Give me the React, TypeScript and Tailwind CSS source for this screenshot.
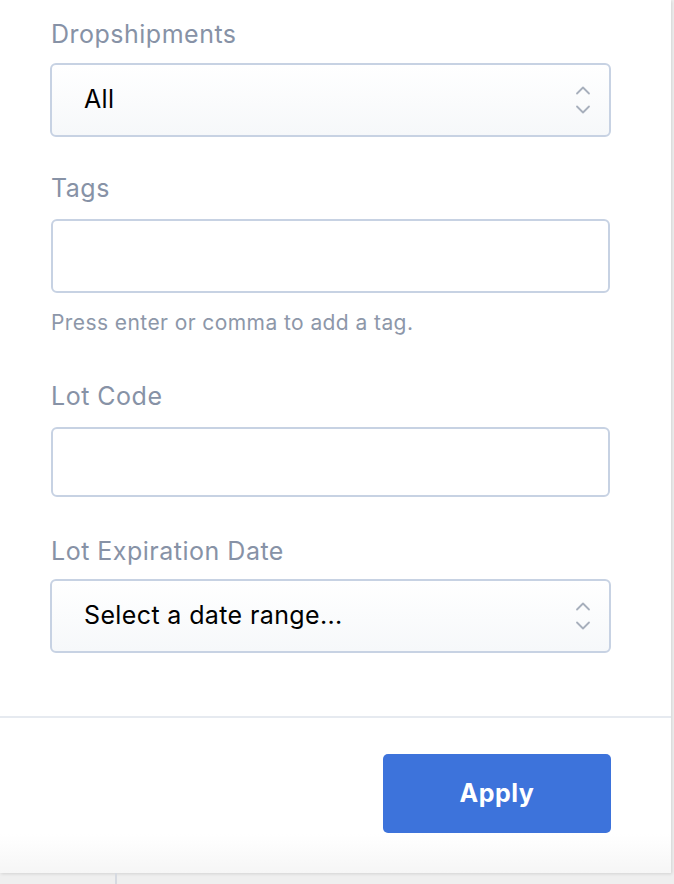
import React from 'react';

const font = { fontFamily: 'Inter, "Liberation Sans", sans-serif' };

const Chevrons: React.FC = () => (
  <svg width="16" height="28" viewBox="0 0 16 28" fill="none" className="text-[#a7afbc]">
    <path d="M2 7.5 L8 1.5 L14 7.5" stroke="currentColor" strokeWidth="1.8" strokeLinecap="round" strokeLinejoin="round" />
    <path d="M2 20.5 L8 26.5 L14 20.5" stroke="currentColor" strokeWidth="1.8" strokeLinecap="round" strokeLinejoin="round" />
  </svg>
);

const Label: React.FC<{ children: React.ReactNode; className?: string }> = ({ children, className }) => (
  <div className={`pl-[1px] text-[25px] leading-8 tracking-[0.02em] text-[#8792a6] ${className ?? ''}`}>{children}</div>
);

const SelectBox: React.FC<{ value: string; className?: string }> = ({ value, className }) => (
  <div
    className={`flex h-[74px] w-[561px] items-center justify-between rounded-[6px] border-2 border-[#c7d2e3] bg-gradient-to-b from-white to-[#f6f8fa] pl-[32px] pr-[18px] ${className ?? ''}`}
  >
    <span className="text-[25px] tracking-[0.015em] text-black">{value}</span>
    <Chevrons />
  </div>
);

const TextBox: React.FC<{ height: string; className?: string }> = ({ height, className }) => (
  <div className={`ml-[1px] w-[559px] rounded-[6px] border-2 border-[#c7d2e3] bg-white ${height} ${className ?? ''}`} />
);

export default function App() {
  return (
    <div className="h-[884px] w-[674px] overflow-hidden bg-[#efefef]" style={font}>
      <div className="flex h-[873px] w-[671px] flex-col bg-white shadow-[1px_1px_3px_rgba(0,0,0,0.12)]">
        <div className="flex flex-col pl-[50px] pt-[18px]">
          <Label>Dropshipments</Label>
          <SelectBox value="All" className="mt-[13px]" />

          <Label className="mt-[35px]">Tags</Label>
          <TextBox height="h-[74px]" className="mt-[15px]" />
          <div className="mt-[16px] pl-[1px] text-[21px] leading-7 tracking-[0.02em] text-[#8d97a9]">
            Press enter or comma to add a tag.
          </div>

          <Label className="mt-[43px]">Lot Code</Label>
          <TextBox height="h-[70px]" className="mt-[15px]" />

          <Label className="mt-[38px]">Lot Expiration Date</Label>
          <SelectBox value="Select a date range..." className="mt-[12px]" />
        </div>

        <div className="mt-[63px] h-[2px] w-full bg-[#e6eaf0]" />

        <div className="flex flex-1 justify-end bg-gradient-to-b from-white from-75% to-[#f6f6f6] pr-[60px] pt-[36px]">
          <button className="h-[79px] w-[228px] rounded-[5px] bg-[#3d73db] text-[25px] font-bold tracking-[0.02em] text-white">
            Apply
          </button>
        </div>
      </div>
      <div className="flex h-[11px] w-full">
        <div className="w-[115px]" />
        <div className="w-[2px] bg-[#d6dae1]" />
      </div>
    </div>
  );
}
